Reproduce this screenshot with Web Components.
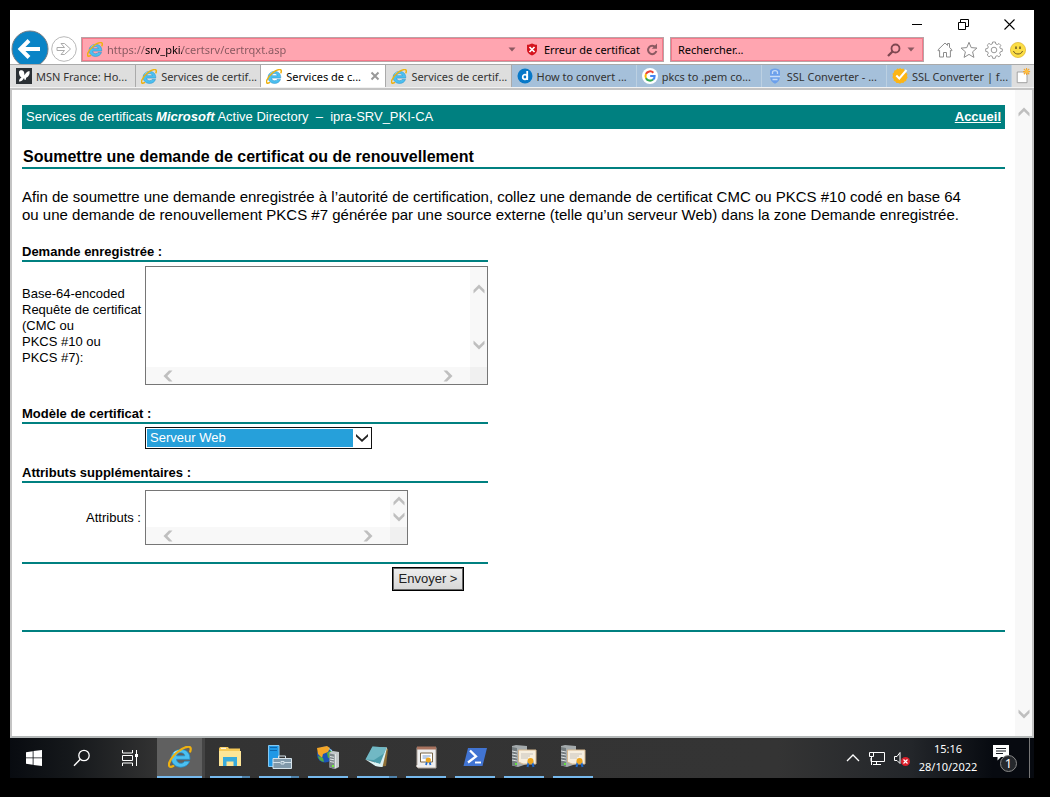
<!DOCTYPE html>
<html lang="fr">
<head>
<meta charset="utf-8">
<title>Services de certificats Microsoft Active Directory</title>
<style>
html, body { height: 100%; }
body { margin: 0; background: #000; font-family: "Liberation Sans", Arial, sans-serif; }
</style>
</head>
<body>
<remote-desktop>
  <browser-window>
    <nav-bar slot="nav"></nav-bar>
    <tab-strip slot="tabs">
      <browser-tab icon="msn">MSN France: Ho...</browser-tab>
      <browser-tab icon="ie">Services de certif...</browser-tab>
      <browser-tab icon="ie" active>Services de c...</browser-tab>
      <browser-tab icon="ie">Services de certif...</browser-tab>
      <browser-tab icon="digi" tint>How to convert ...</browser-tab>
      <browser-tab icon="google" tint>pkcs to .pem co...</browser-tab>
      <browser-tab icon="shield" tint>SSL Converter - ...</browser-tab>
      <browser-tab icon="check" tint>SSL Converter | f...</browser-tab>
    </tab-strip>
    <certificate-page></certificate-page>
  </browser-window>
  <task-bar slot="taskbar"></task-bar>
</remote-desktop>

<script>
function define(name, css, html, setup) {
  const template = document.createElement('template');
  template.innerHTML = '<style>:host,*{box-sizing:border-box}' + css + '</style>' + html;
  customElements.define(name, class extends HTMLElement {
    constructor() {
      super();
      this.attachShadow({ mode: 'open' }).append(template.content.cloneNode(true));
    }
    connectedCallback() { if (setup) setup(this, this.shadowRoot); }
  });
}

const ICONS = {
  ie: ['1 2 30 28', `<path d="M17 6.500C10 6.500 5 11 5 17.500S10 29 17 29c5.500 0 9.500-2.800 11.200-7.500h-6.400c-1 1.700-2.500 2.500-4.600 2.500-3.300 0-5.400-1.900-5.600-5h17C29 11 24.500 6.500 17 6.500zM11.700 14.500c.5-2.500 2.300-4 5.200-4s4.800 1.500 5.200 4z" fill="#4cc0f0" stroke="#2390cc" stroke-width="1"/><path d="M8 11c2-2 5-3.200 9-3.200" stroke="#a5e6ff" stroke-width="1.500" fill="none"/><path d="M29 9c1.500-4 .5-6.500-3.500-6C18 4 6 14 2.500 23c-1.800 4.700.5 6.800 5 4.500" fill="none" stroke="#eeb111" stroke-width="2.800" stroke-linecap="round"/>`],
  msn: ['0 0 16 16', `<path fill="#2b3035" d="M0 0h16v16H0z"/><path fill="#fff" d="M3 4c0-2 4-2.500 5 0l.6 3.200C9.500 5 11 3.500 13.500 3c.6 3-.5 5.600-3.600 7 .5 1-.1 2-1.200 2L8 10c-.8 2-2.600 3.600-5 3.500 0-1.800 1-3.300 2.500-4C3.500 8.500 3 6.500 3 4z"/>`],
  digi: ['0 0 16 16', `<circle cx="8" cy="8" r="7.500" fill="#0778c8"/><path d="M10.200 3v9" stroke="#fff" stroke-width="1.800"/><circle cx="8" cy="9" r="2.300" stroke="#fff" stroke-width="1.700" fill="none"/>`],
  google: ['0 0 18 18', `<circle cx="9" cy="9" r="9" fill="#fff"/><g fill="none" stroke-width="2.300"><path stroke="#ea4335" d="M4.400 6.800A5.200 5.200 0 0 1 12.800 5.300"/><path stroke="#fbbc05" d="M4.600 11.700a5.200 5.200 0 0 1-.1-5"/><path stroke="#34a853" d="M12.400 13A5.200 5.200 0 0 1 4.500 11.500"/><path stroke="#4285f4" d="M9.200 9h5c.1 1.700-.6 3.100-1.800 4"/></g>`],
  shield: ['0 0 16 16', `<path d="M8 .500c2.500 0 5 1 5 2.500v5c0 4-2 6.500-5 7.700C5 14.500 3 12 3 8V3C3 1.500 5.500.500 8 .500z" fill="#6ca0eb"/><path d="M5.500 6V4.500c0-2.500 5-2.500 5 0V6M3 8.500h10M5.500 11.500h5" fill="none" stroke="#c7dcf7" stroke-width="1.300"/>`],
  check: ['0 0 16 16', `<path d="M8 0l1.600.9 1.800-.3.900 1.600 1.700.8.1 1.800L15.500 6 15 8l.6 1.700-1.200 1.500-.2 1.800-1.700.6-1.200 1.500-1.800-.3L8 15.800l-1.700-.9-1.900.2-1-1.500-1.700-.8v-1.900L.400 9.400 1 7.500.500 5.700l1.400-1.300.4-1.900L4.100 2 5.300.600 7 1z" fill="#fdb515"/><path d="M4.300 7.500l3 3L14.500 2" fill="none" stroke="#fff" stroke-width="2"/>`],
  newtab: ['0 0 18 18', `<path d="M2.500 4.500h11v12h-11z" fill="#fff" stroke="#999"/><path d="M13 0v8M9 4h8M10 1l6 6M16 1l-6 6" stroke="#f4a62c" stroke-width="1.300"/><circle cx="13" cy="4" r="2" fill="#ffc040"/>`],
  close: ['0 0 10 10', `<path d="M1.500 1.500l7 7M8.500 1.500l-7 7" stroke="#999" stroke-width="2"/>`],
  back: ['0 0 38 38', `<circle cx="19" cy="19" r="18" fill="#0a84c6" stroke="#777e84" stroke-width="1"/><path d="M29 19H10M18 10.500L9.500 19l8.500 8.500" fill="none" stroke="#fff" stroke-width="4"/>`],
  forward: ['0 0 26 26', `<circle cx="13" cy="13" r="12.300" fill="#fff" stroke="#b8b8b8"/><path d="M6 11.500h7.500L10 7.500h3.500L19.500 13l-6 5.500H10l3.500-4H6z" fill="#fff" stroke="#aaa"/>`],
  caret: ['0 0 8 5', `<path d="M.500.500h7L4 4.500z" fill="#8b5961"/>`],
  error: ['0 0 12 13', `<path d="M6 .500c2 1 3.500 1.300 5 1.300V7c0 2.500-2 4.500-5 5.500C3 11.500 1 9.500 1 7V1.800C2.500 1.800 4 1.500 6 .500z" fill="#d4141e"/><path d="M3.500 4l5 5M8.500 4l-5 5" stroke="#fff" stroke-width="1.700"/>`],
  refresh: ['0 0 12 13', `<path d="M9.500 4.300A4.200 4.200 0 1 0 10.300 8" fill="none" stroke="#8b5961" stroke-width="2"/><path d="M11 .500V5.800H5.800z" fill="#8b5961"/>`],
  find: ['0 0 14 14', `<circle cx="8.500" cy="5.500" r="4" fill="none" stroke="#7e4750" stroke-width="1.800"/><path d="M5.500 8.500L1 13" stroke="#7e4750" stroke-width="2.300"/>`],
  home: ['0 0 16 16', `<path d="M.800 8L8 1l2.500 2.400V1.500h2v4L15.200 8l-1 1-.8-.7V15H9.500v-4.500h-3V15H2.600V8.300l-.8.7z" fill="#fff" stroke="#8c8c8c"/>`],
  star: ['0 0 18 18', `<path d="M9 1.300l2.200 5.300 5.700.5-4.300 3.700 1.300 5.600L9 13.400l-4.900 3 1.300-5.600L1.100 7.100l5.700-.5z" fill="#fff" stroke="#8c8c8c"/>`],
  gear: ['0 0 18 18', `<path d="M7.600 1h2.800l.4 2 1.600.6L14 2.500 15.800 4.300l-1 1.700.5 1.500 2 .4v2.400l-2 .5-.6 1.500 1.100 1.700-1.900 1.800-1.700-1.100-1.500.6-.5 2H7.700l-.4-2-1.600-.6L4 15.800 2.200 14l1.100-1.700-.6-1.500-2-.4V7.800l2-.4.6-1.500L2.200 4.200 4 2.400l1.700 1.100L7.200 3z" fill="#fff" stroke="#999"/><circle cx="9" cy="9" r="2.800" fill="#fff" stroke="#999"/>`],
  smile: ['0 0 16 16', `<circle cx="8" cy="8" r="7.600" fill="#fbdd45" stroke="#d8a91a" stroke-width=".6"/><path d="M6 4.500v2.500M10 4.500v2.500" stroke="#6b5520" stroke-width="1.500"/><path d="M3.500 9c1 4 8 4 9 0" fill="none" stroke="#6b5520"/>`],
  minimize: ['0 0 11 11', `<path d="M0 5.500h10" stroke="#000"/>`],
  restore: ['0 0 11 11', `<path d="M.500 3.500h7v7h-7zM2.500 3V.500h8v7H8" fill="none" stroke="#000"/>`],
  exit: ['0 0 11 11', `<path d="M.500.500l10 10M10.500.500l-10 10" stroke="#000" stroke-width="1.100"/>`],
  start: ['0 0 16 16', `<path fill="#fff" d="M0 2.200L6.700 1.200V7.500H0zM7.500 1.100L16 0v7.500H7.500zM0 8.300h6.700v6.500L0 13.800zM7.500 8.300H16V16l-8.500-1.100z"/>`],
  search: ['0 0 18 18', `<circle cx="11" cy="6.500" r="5.200" fill="none" stroke="#fff" stroke-width="1.300"/><path d="M7.300 10.300L1 16.700" stroke="#fff" stroke-width="1.400"/>`],
  taskview: ['0 0 18 18', `<path d="M1.500 1v3h10V1M1.500 17v-3h10v3M1.500 6.500h10v5h-10zM15.500 1v16" fill="none" stroke="#fff"/><path fill="#fff" d="M14 5h3v3h-3z"/>`],
  folder: ['0 0 24 24', `<path d="M1 3.500l1-1.500h8l1 1.500h11V20H1z" fill="#f6c958"/><path d="M1 6h22v15H1z" fill="#fde597"/><path d="M5 21v-9h14v9h-3.500v-4.500h-7V21z" fill="#38aadc"/><path d="M3 3.300h5" stroke="#fff"/>`],
  server: ['0 0 26 26', `<path d="M2.500 1.500h10.500v21H2.500z" fill="#1f98e6" stroke="#83c8f3"/><path d="M4 3.500h7M4 6.500h7" stroke="#0f69b0"/><path d="M7 14.500h18.500v10H7z" fill="#8199aa" stroke="#d5e2ea"/><path d="M12.500 14v-2h7v2M7 18.500h7M18 18.500h7M15 17.500h3v2.500h-3z" fill="none" stroke="#d5e2ea"/>`],
  iis: ['0 0 24 24', `<circle cx="9" cy="9.500" r="8" fill="#1b54b5"/><path d="M1 3l10-2 3 2-2 4-5 2-1 4-4-4z" fill="#f3a628"/><path d="M2 11l5 2 1 4c-3-.5-5.500-2.500-6-6zM11 8l5-3v7l-4 1z" fill="#55b03b"/><path d="M12 3l4 2 1 3" fill="#9ad6fa"/><path d="M13.500 7.500l3.500-1.500 6 1v15l-4 2-5.500-1.500z" fill="#c3c8ca"/><path d="M13.500 8.500l5 1V24l-5-1.500z" fill="#7d868a"/><path d="M14 11.500l4 .8M14 14l4 .8M14 16.500l4 .8M19.500 9v14" stroke="#e0e5e7"/><path d="M16 20h2v2h-2z" fill="#72ed3b"/>`],
  notes: ['0 0 24 24', `<path d="M21 3l2 1-2 17-5 .5z" fill="#8f7038"/><path d="M8 2l14 .5L17.500 22l-7-1z" fill="#daf0f2"/><path d="M7.500 1.500l14 1L15 19 .500 14.500z" fill="#4b9caa"/><path d="M7.500 1.500l14 1-2.500 6L9 15 .500 14.500z" fill="#82c5cf" opacity=".7"/><path d="M.500 14.500L15 19l2.500 3-7-1z" fill="#def3f4"/>`],
  certstore: ['0 0 24 24', `<path d="M3 2.500h19V23H4l-2-2 1-1z" fill="#eee" stroke="#afa59c"/><path d="M3 1.500h19v3H3z" fill="#a8725e"/><path d="M6.500 8h12v9h-12z" fill="#fff" stroke="#796648"/><path d="M8.500 11h8M8.500 13h5" stroke="#759bcf"/><path d="M13.500 15l-1.500 5M15 15l1.500 5" stroke="#226bd0" stroke-width="1.800"/><circle cx="14.300" cy="15" r="2.600" fill="#eca51e"/>`],
  powershell: ['0 0 24 24', `<path d="M5 3h19l-4.500 18H.500z" fill="#4174d2"/><path d="M7 5.500l6 6L5 17.500" fill="none" stroke="#fff" stroke-width="2.300"/><path d="M12 17.500h6" stroke="#fff" stroke-width="1.900"/>`],
  certserver: ['0 0 26 26', `<path d="M1 2l4-1 11 1v18l-9 3-6-1.500z" fill="#a4aaac"/><path d="M1 3l5 1v18.500l-5-1.300z" fill="#747c7f"/><path d="M1 7l5 1M1 10l5 1M1 13l5 1M1 16l5 1" stroke="#dce0e1"/><path d="M4 19h2v2H4z" fill="#64e040"/><path d="M7.500 6h17.500v14H12l-4.500-2z" fill="#f7efdf" stroke="#d6b88f"/><path d="M10 10h12M10 12h9M10 14h7" stroke="#c7c3bd"/><path d="M18 17l-1.500 6M21 17l1.500 6" stroke="#1b65ca" stroke-width="2"/><circle cx="19.500" cy="17" r="3" fill="#eca51e"/>`],
  trayup: ['0 0 14 8', `<path d="M1 7l6-6 6 6" fill="none" stroke="#fff" stroke-width="1.300"/>`],
  network: ['0 0 17 15', `<path d="M5 1.500h11.500v9H3V7M8.500 11v2.500M5 13.500h8M1.500 1.500h4v4h-4zM3.500 6v8" fill="none" stroke="#fff"/>`],
  sound: ['0 0 17 15', `<path d="M1.500 5.500H4L7 1.500v11L4 9.500H1.500z" fill="none" stroke="#fff"/><circle cx="12.500" cy="10.500" r="4.500" fill="#dc1f2b"/><path d="M10.500 8.500l4 4M14.500 8.500l-4 4" stroke="#fff" stroke-width="1.200"/>`],
  note: ['0 0 18 18', `<path d="M1 1h16v12H9l-3.500 3.500V13H1z" fill="#fff"/><path d="M4 4.500h10M4 7h10M4 9.500h7" stroke="#161b21"/>`],
  up: ['0 0 12 12', `<path d="M.500 10.500V7L6 1.500 11.500 7v3.500L6 5.300z" fill="#bfbfbf"/>`],
  down: ['0 0 12 12', `<path d="M.500 1.500V5L6 10.500 11.500 5V1.500L6 6.700z" fill="#bfbfbf"/>`],
  left: ['0 0 12 12', `<path d="M10.500.500H7L1.500 6 7 11.500h3.500L5.300 6z" fill="#bfbfbf"/>`],
  right: ['0 0 12 12', `<path d="M1.500.500H5L10.500 6 5 11.500H1.500L6.700 6z" fill="#bfbfbf"/>`],
  drop: ['0 0 12 8', `<path d="M0 0l6 5.500L12 0v2.500l-6 5.500-6-5.500z" fill="#222"/>`]
};

define('ui-icon', `:host{display:inline-flex;flex:none}`, ``, (host, root) => {
  if (root.querySelector('svg')) return;
  const [box, art] = ICONS[host.getAttribute('name')];
  const ratio = box.split(' ');
  const width = host.getAttribute('size') || ratio[2];
  const height = Math.round(width * ratio[3] / ratio[2]);
  const holder = document.createElement('template');
  holder.innerHTML = `<svg viewBox="${box}" width="${width}" height="${height}" aria-hidden="true">${art}</svg>`;
  root.append(holder.content);
});

define('remote-desktop', `
  :host{display:flex;flex-direction:column;min-height:100vh;padding:10px 16px 19px 10px}
`, `<slot></slot><slot name="taskbar"></slot>`);

define('browser-window', `
  :host{display:flex;flex-direction:column;flex:1;background:#fff}
  .view{flex:1;display:flex;border:2px solid #c4c4c4;border-bottom-color:#b4b8b8}
  ::slotted(certificate-page){flex:1}
`, `<slot name="nav"></slot><slot name="tabs"></slot>
<div class="view"><slot></slot><scroll-track></scroll-track></div>`);

define('nav-bar', `
  :host{display:flex;flex-direction:column;height:54px;overflow:hidden;font:11px "Noto Sans",sans-serif;color:#000}
  button{border:0;padding:0;background:none;display:flex;align-items:center;justify-content:center}
  .controls{display:flex;justify-content:flex-end;height:27px;padding-right:2px}
  .controls button{width:46px;height:28px}
  .row{display:flex;align-items:flex-start;height:25px}
  .back{margin:-7px 2px 0 1px}
  .forward{margin:-1px 4px 0 0}
  .field{display:flex;align-items:center;height:25px;border:1px solid #b9a3a6;box-shadow:inset 0 0 0 1px #f5798a;background:#ffa5b0;padding:0 5px}
  .address{flex:1;min-width:0;gap:4px}
  .search{flex:0 1 254px;margin-left:6px;gap:6px;padding:0 8px 0 7px}
  input{flex:1;min-width:0;width:0;border:0;outline:0;padding:0;background:none;font:inherit;color:#000}
  .url{color:transparent;background:linear-gradient(90deg,#85575e 38px,#000 38px,#000 75px,#85575e 75px);-webkit-background-clip:text;background-clip:text}
  input::placeholder{color:#000;opacity:1}
  .error{gap:6px;font:inherit;color:#000;margin:0 2px 0 6px;white-space:nowrap}
  .tools{display:flex;align-items:center;justify-content:space-between;width:110px;height:25px;padding:0 8px 0 13px}
`, `<div class="controls">
  <button aria-label="Réduire"><ui-icon name="minimize"></ui-icon></button>
  <button aria-label="Restaurer"><ui-icon name="restore"></ui-icon></button>
  <button aria-label="Fermer"><ui-icon name="exit"></ui-icon></button>
</div>
<div class="row">
  <button class="back" aria-label="Précédent"><ui-icon name="back"></ui-icon></button>
  <button class="forward" aria-label="Suivant"><ui-icon name="forward"></ui-icon></button>
  <div class="field address"><ui-icon name="ie" size="16"></ui-icon>
    <input class="url" aria-label="Adresse" value="https://srv_pki/certsrv/certrqxt.asp">
    <button aria-label="Historique"><ui-icon name="caret"></ui-icon></button>
    <button class="error"><ui-icon name="error"></ui-icon>Erreur de certificat</button>
    <button aria-label="Actualiser"><ui-icon name="refresh"></ui-icon></button>
  </div>
  <div class="field search"><input aria-label="Rechercher" placeholder="Rechercher...">
    <button aria-label="Lancer la recherche"><ui-icon name="find"></ui-icon></button>
    <button aria-label="Moteurs"><ui-icon name="caret"></ui-icon></button>
  </div>
  <div class="tools">
    <button aria-label="Accueil"><ui-icon name="home"></ui-icon></button>
    <button aria-label="Favoris"><ui-icon name="star"></ui-icon></button>
    <button aria-label="Outils"><ui-icon name="gear"></ui-icon></button>
    <button aria-label="Commentaires"><ui-icon name="smile"></ui-icon></button>
  </div>
</div>`);

define('tab-strip', `
  :host{display:flex;height:24px;border-top:1px solid #aaa;border-bottom:1px solid #f2f2f2;padding-left:1px;background:#dedede;font:11px "Noto Sans",sans-serif}
  button{width:22px;border:0;padding:0;background:none;display:flex;align-items:center;justify-content:center}
`, `<slot></slot><button aria-label="Nouvel onglet"><ui-icon name="newtab" size="16"></ui-icon></button>`);

define('browser-tab', `
  :host{display:flex;align-items:center;flex:1 1 0;min-width:0;gap:4px;padding-left:5px;border-right:1px solid #aaa;color:#333;white-space:nowrap;overflow:hidden}
  :host([active]){background:#fff;color:#000}
  :host([tint]){background:#a5c0da;border-right-color:#bcd0e2}
  span{flex:1}
  button{border:0;padding:0;margin-right:5px;background:none;display:flex}
`, `<span hidden></span>`, (host, root) => {
  if (root.querySelector('ui-icon')) return;
  const holder = document.createElement('template');
  holder.innerHTML = `<ui-icon name="${host.getAttribute('icon')}" size="16"></ui-icon><span><slot></slot></span>` +
    (host.hasAttribute('active') ? '<button aria-label="Fermer l’onglet"><ui-icon name="close"></ui-icon></button>' : '');
  root.querySelector('span').replaceWith(holder.content);
});

define('scroll-track', `
  :host{display:flex;flex-direction:column;justify-content:space-between;align-items:center;width:17px;padding:16px 0;background:#f8f8f8}
  :host([compact]){padding:4px 0}
  :host([horizontal]){flex-direction:row;width:auto;height:17px;padding:0 16px}
`, ``, (host, root) => {
  if (root.querySelector('ui-icon')) return;
  for (const name of host.hasAttribute('horizontal') ? ['left', 'right'] : ['up', 'down']) {
    const icon = document.createElement('ui-icon');
    icon.setAttribute('name', name);
    root.append(icon);
  }
});

define('section-title', `
  :host{display:block;border-bottom:2px solid #008080;font-weight:bold;font-size:13px;line-height:16px}
  h2{margin:0;font:inherit}
`, `<h2><slot></slot></h2>`);

define('certificate-page', `
  :host{display:block;padding:15px 10px 24px;font-size:13px;line-height:16px;color:#000}
  header{display:flex;justify-content:space-between;align-items:center;height:24px;padding:0 4px;background:#008080;color:#fff}
  header a{color:#fff;font-weight:bold}
  header span{white-space:pre}
  h1{margin:19px 0 19px;padding:0 1px 1px;border-bottom:2px solid #008080;font-size:16px;line-height:18px}
  p{margin:0 0 20px;font-size:15px;line-height:18px}
  form{max-width:466px}
  .line{display:grid;grid-template-columns:119px 1fr;gap:4px;align-items:center;justify-items:start}
  .line label{white-space:nowrap}
  .request{margin:4px 0 21px}
  .model{margin:3px 0 16px}
  .extra{margin:7px 0 17px}
  .extra label{justify-self:end}
  .box{display:grid;grid-template-columns:1fr 17px;grid-template-rows:1fr 17px;border:1px solid #767676;width:100%;height:119px;background:#f0f0f0}
  .extra .box{width:263px;height:55px}
  textarea{min-width:0;min-height:0;border:0;outline:0;resize:none;padding:2px;background:#fff;font:13px "Liberation Mono",monospace;overflow:hidden}
  .pick{display:grid;align-items:center;width:227px}
  .pick>*{grid-area:1/1}
  select{appearance:none;width:100%;height:22px;border:1px solid #111;border-radius:0;outline:0;padding:0 20px 0 4px;font:inherit;color:#fff;background:linear-gradient(90deg,#fff 1px,#26a0da 1px,#26a0da 207px,#fff 207px);box-shadow:inset 0 1px #fff,inset 0 -1px #fff}
  option{color:#000;background:#fff}
  .pick ui-icon{justify-self:end;padding-right:4px;pointer-events:none}
  .submit{border-top:2px solid #008080;padding:3px 24px 39px 0;display:flex;justify-content:flex-end}
  .submit button{height:24px;width:72px;padding:0 0 1px;border:1px solid #000;box-shadow:inset 0 0 0 1px #666;background:linear-gradient(#eee,#d6d6d6);font:13px "Liberation Sans",sans-serif;color:#222}
  hr{height:2px;margin:0;border:0;background:#008080}
`, `<header><span>Services de certificats <b><i>Microsoft</i></b> Active Directory &nbsp;–&nbsp; ipra-SRV_PKI-CA</span><a href="#">Accueil</a></header>
<h1>Soumettre une demande de certificat ou de renouvellement</h1>
<p>Afin de soumettre une demande enregistrée à l’autorité de certification, collez une demande de certificat CMC ou PKCS #10 codé en base 64<br>ou une demande de renouvellement PKCS #7 générée par une source externe (telle qu’un serveur Web) dans la zone Demande enregistrée.</p>
<form>
  <section-title>Demande enregistrée :</section-title>
  <div class="line request">
    <label for="request">Base-64-encoded<br>Requête de certificat<br>(CMC ou<br>PKCS #10 ou<br>PKCS #7):</label>
    <div class="box"><textarea id="request"></textarea><scroll-track></scroll-track><scroll-track horizontal></scroll-track></div>
  </div>
  <section-title>Modèle de certificat :</section-title>
  <div class="line model"><span></span>
    <div class="pick"><select aria-label="Modèle de certificat"><option>Serveur Web</option></select><ui-icon name="drop"></ui-icon></div>
  </div>
  <section-title>Attributs supplémentaires :</section-title>
  <div class="line extra"><label for="attributes">Attributs :</label>
    <div class="box"><textarea id="attributes"></textarea><scroll-track compact></scroll-track><scroll-track horizontal></scroll-track></div>
  </div>
  <div class="submit"><button type="button">Envoyer &gt;</button></div>
</form>
<hr>`);

define('task-button', `
  :host{display:flex;width:40px}
  button{flex:1;border:0;border-bottom:2px solid #76b9ed;padding:0;background:none;display:flex;align-items:center;justify-content:center}
  :host([plain]){width:48px}
  :host([plain]) button{border-bottom:0}
  :host([active]){width:48px;border-right:3px solid #454545}
  :host([active]) button{background:#606060}
  :host([stacked]) button{border-image:linear-gradient(90deg,#76b9ed 31px,#4f83ac 31px) 2}
`, `<button><slot></slot></button>`, (host, root) => {
  root.querySelector('button').setAttribute('aria-label', host.getAttribute('label'));
});

define('task-bar', `
  :host{display:flex;height:40px;color:#fff;font:11px "Noto Sans",sans-serif;background:linear-gradient(90deg,#080b10,#15181b 60px,#333 150px,#343434 75%,#23262a 88%,#070a10 96%)}
  .apps{display:flex;gap:9px;margin-left:5px}
  task-button[active]{margin-left:3px}
  .tray{display:flex;align-items:center;gap:8px;margin-left:auto}
  time{width:60px;text-align:center;line-height:18px;white-space:nowrap}
  .notice{position:relative;border:0;padding:0;margin:0 11px 0 6px;width:27px;height:28px;background:none;color:#fff;font:13px "Noto Sans",sans-serif;display:flex;align-items:flex-start}
  .notice b{position:absolute;right:2px;bottom:0;width:17px;height:17px;border-radius:50%;border:1px solid #888;background:#25282c;line-height:15px;font-weight:normal;text-align:center}
  .desk{width:5px;height:40px;border:0;border-left:1px solid #777;padding:0;margin-left:-9px;background:none}
`, `<task-button plain label="Démarrer"><ui-icon name="start"></ui-icon></task-button>
<task-button plain label="Rechercher"><ui-icon name="search"></ui-icon></task-button>
<task-button plain label="Affichage des tâches"><ui-icon name="taskview"></ui-icon></task-button>
<task-button active label="Internet Explorer"><ui-icon name="ie" size="24"></ui-icon></task-button>
<div class="apps">
  <task-button stacked label="Explorateur"><ui-icon name="folder"></ui-icon></task-button>
  <task-button stacked label="Gestionnaire de serveur"><ui-icon name="server"></ui-icon></task-button>
  <task-button label="Gestionnaire IIS"><ui-icon name="iis"></ui-icon></task-button>
  <task-button stacked label="Bloc-notes"><ui-icon name="notes"></ui-icon></task-button>
  <task-button label="Certificats"><ui-icon name="certstore"></ui-icon></task-button>
  <task-button label="PowerShell"><ui-icon name="powershell"></ui-icon></task-button>
  <task-button label="Autorité de certification"><ui-icon name="certserver"></ui-icon></task-button>
  <task-button label="Autorité de certification"><ui-icon name="certserver"></ui-icon></task-button>
</div>
<div class="tray">
  <ui-icon name="trayup"></ui-icon><ui-icon name="network"></ui-icon><ui-icon name="sound"></ui-icon>
  <time datetime="2022-10-28T15:16">15:16<br>28/10/2022</time>
  <button class="notice" aria-label="Notifications"><ui-icon name="note"></ui-icon><b>1</b></button>
  <button class="desk" aria-label="Afficher le Bureau"></button>
</div>`);
</script>
</body>
</html>
